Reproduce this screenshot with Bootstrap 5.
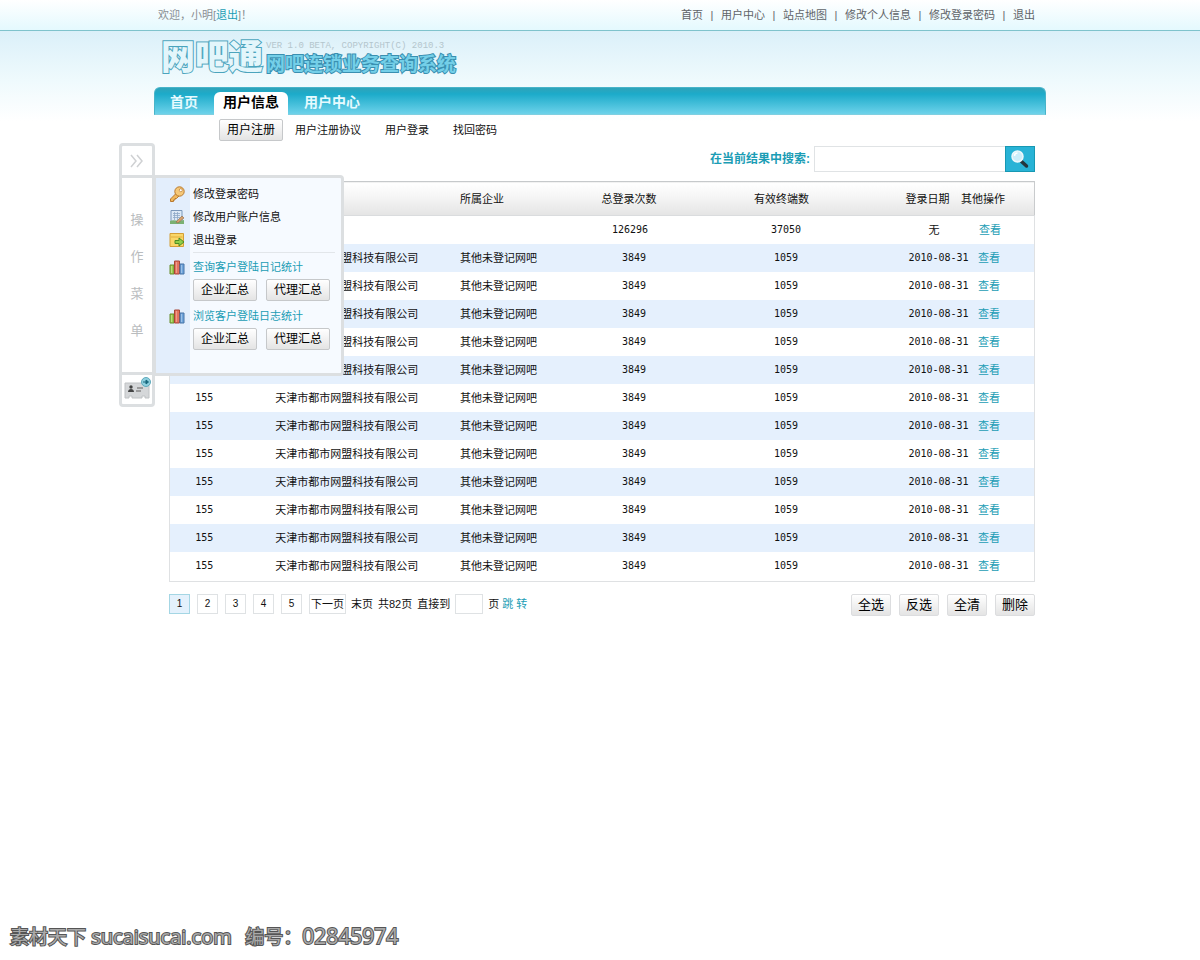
<!DOCTYPE html>
<html lang="zh-CN">
<head>
<meta charset="utf-8">
<meta name="viewport" content="width=device-width, initial-scale=1">
<title>网吧连锁业务查询系统</title>
<link href="https://cdn.jsdelivr.net/npm/bootstrap@5.3.0/dist/css/bootstrap.min.css" rel="stylesheet">
<style>
:root{--teal:#1b9db5;--line:#dcdfe1}
body{font:11px/16px "Liberation Sans","Noto Sans CJK SC",sans-serif;color:#111;
  background:#fff linear-gradient(#dbf0f9,#effafd 50px,#fff 90px) 0 31px/100% 90px no-repeat}
a{text-decoration:none;color:inherit}
.teal,.teal a{color:var(--teal)}
.frame{max-width:892px;width:100%;margin-inline:auto}
.topbar{background:linear-gradient(#fff,#e4f9fe);border-bottom:1px solid #7fc3cc;height:31px;color:#8b9094}
.topbar .frame{padding:0 11px 0 4px}
.toplinks{color:#5f6468}
.toplinks li+li::before{content:"|";display:inline-block;width:18px;text-align:center}
.brand{height:56px;padding-left:7px}
.brand-mark{font:900 34px/48px "Noto Sans CJK SC",sans-serif;color:#e3f6fb;-webkit-text-stroke:2px #4ba4bd;paint-order:stroke fill}
.brand-side{padding:9px 0 0 3px}
.brand-ver{font:9px/12px "Liberation Mono",monospace;color:#b4c6cd}
.brand-name{font:700 19px/22px "Noto Sans CJK SC",sans-serif;color:#74cfe8;-webkit-text-stroke:2px #3a8fb0;paint-order:stroke fill}
.mainnav{height:28px;border:1px solid #48b4c9;border-bottom-color:#7fcfe0;border-radius:6px 6px 0 0;background:linear-gradient(#2fa3b9,#1cabca 6px,#6dd2ea);padding-left:7px}
.mainnav .nav-link{font-size:14px;line-height:20px;font-weight:700;color:#e6fbff;padding:0 8px;margin-top:4px;height:24px;display:block}
.mainnav .nav-link.active{color:#000;background:#fff;border-radius:6px 6px 0 0;padding:0 9px}
.subnav{padding:4px 0 0 65px;gap:12px}
.subnav a{margin-right:12px}
.soft{font-size:12px;line-height:18px;height:22px;padding:1px 7px;border:1px solid #c6c8ca;border-radius:2px;background:linear-gradient(#fff,#e4e4e4);color:#000;white-space:nowrap}
.work{padding:5px 11px 0 15px}
.seek{font-size:12px;font-weight:700}
.seek input{width:191px;height:26px;border:1px solid #e0e3e5;border-right:0;border-radius:0;background:#fff;font-size:12px;padding:0 6px}
.seek button{width:30px;height:26px;border:1px solid #1798b3;background:#28b3d6;padding:0}
.records{table-layout:fixed;width:100%;border:1px solid #dfe1e3;border-top-color:#c6c9cb;margin-top:9px}
.records th{height:34px;font-weight:400;background:linear-gradient(#fff,#f6f6f6 40%,#e4e4e4);border-bottom:1px solid #dadcde}
.records td{height:28px}
.records tr:last-child td{height:30px}
.records th,.records td{padding:0;white-space:nowrap}
.records th:last-child{border-right:1px solid #c9cbcd}
.records tbody tr:nth-child(even){background:#e5f0fd}
.records .num{font-size:10px;font-family:"DejaVu Sans Mono",monospace}
.records :is(th,td):nth-child(-n+2){text-align:center}
.records :is(th,td):nth-child(3){padding-left:5px}
.records :is(th,td):nth-child(4){text-align:center}
.records th:nth-child(4){padding-left:2px}
.records td:nth-child(4){padding-left:12px}
.records :is(th,td):nth-child(5){text-align:center;padding-right:13px}
.records td:nth-child(5){padding-right:4px}
.records th:nth-child(6){padding-left:18px}
.records td:nth-child(6){padding-left:21px}
.records td:nth-child(7){padding-left:17px}
.records .sum td:nth-child(4){padding-left:4px}
.records .sum td:nth-child(6){padding-left:41px}
.records .sum td:nth-child(7){padding-left:18px}
.pager{gap:7px}
.pager .page-box{display:block;min-width:21px;height:20px;line-height:17px;border:1px solid #dfe2e4;text-align:center;font-size:10px;background:#fff}
.pager .page-box.on{background:#e4f1fc;border-color:#a4d6e4}
.pager .page-next{font-size:11px;line-height:18px;padding:0 1px}
.pager .jump{gap:5px}
.pager input{width:28px;height:20px;border:1px solid #dfe2e4;padding:0 3px;font-size:10px}
.below{padding-top:12px}
.tools{gap:8px}
.tools .soft{font-size:13px;border-color:#dcdddf;padding:1px 6px}
.dock{position:absolute;left:-35px;top:28px;z-index:5}
.strip{width:36px;border:3px solid var(--line);border-radius:4px;background:#fff;color:#b9bcbe;font-size:13px}
.strip button{border:0;background:none;padding:0;height:29px}
.strip .word{border:solid var(--line);border-width:3px 0;height:200px;gap:21px}
.panel{width:191px;height:201px;margin:32px 0 0 -2px;border:3px solid var(--line);border-radius:0 4px 4px 0;padding:4px 6px 0 13px;
  background:linear-gradient(90deg,#e3eefc 34px,#f6faff 34px)}
.panel .entry{height:23px;gap:8px;font-size:11px}
.panel .entry svg{flex:none}
.panel .rule{border-top:1px solid #e2e6ea;margin:1px 0 2px 24px}
.panel .pair{gap:9px;padding:1px 0 0 24px;height:26px}
.stamp{font:19px/28px "Noto Sans CJK SC",sans-serif;color:#aaa;-webkit-text-stroke:2px #555;paint-order:stroke fill;padding:0 0 9px 10px}
.stamp span{font:20px/28px "Open Sans",sans-serif}
.stamp .site{margin:0 4px 0 1px}
.stamp .serial{font-size:21px}
</style>
</head>
<body>
<svg width="0" height="0" class="position-absolute" aria-hidden="true">
  <symbol id="bars" viewBox="0 0 16 16"><path d="M1 6h4v9H1z" fill="#9fcb4e" stroke="#668c2d"/><path d="M5.500 2h5v13h-5z" fill="#e4735d" stroke="#a64536"/><path d="M11 5h4v10h-4z" fill="#70a5dc" stroke="#4672a5"/><path d="M2.500 7v7M7.500 3v11M12.500 6v8" stroke="#fff" stroke-opacity=".3"/></symbol>
</svg>
<div class="d-flex flex-column min-vh-100">
  <header>
    <div class="topbar">
      <div class="frame d-flex justify-content-between align-items-center h-100">
        <div>欢迎，小明[<a href="#" class="teal">退出</a>]！</div>
        <ul class="toplinks list-unstyled d-flex mb-0">
          <li><a href="#">首页</a></li><li><a href="#">用户中心</a></li><li><a href="#">站点地图</a></li><li><a href="#">修改个人信息</a></li><li><a href="#">修改登录密码</a></li><li><a href="#">退出</a></li>
        </ul>
      </div>
    </div>
    <div class="frame">
      <div class="brand d-flex">
        <div class="brand-mark">网吧通</div>
        <div class="brand-side">
          <div class="brand-ver">VER 1.0 BETA, COPYRIGHT(C) 2010.3</div>
          <div class="brand-name">网吧连锁业务查询系统</div>
        </div>
      </div>
      <nav class="mainnav">
        <ul class="nav">
          <li><a class="nav-link me-1" href="#">首页</a></li>
          <li class="ms-1"><a class="nav-link active" href="#">用户信息</a></li>
          <li class="ms-2"><a class="nav-link" href="#">用户中心</a></li>
        </ul>
      </nav>
    </div>
  </header>

  <main class="frame position-relative">
    <nav class="subnav d-flex align-items-center">
      <button type="button" class="soft">用户注册</button>
      <a href="#">用户注册协议</a><a href="#">用户登录</a><a href="#">找回密码</a>
    </nav>

    <aside class="dock d-flex align-items-start">
      <div class="strip d-flex flex-column">
        <button type="button" aria-label="展开"><svg width="16" height="16" viewBox="0 0 16 16" fill="none" stroke="#cfd1d3" stroke-width="1.500"><path d="M2 2l5 6-5 6M8 2l5 6-5 6"/></svg></button>
        <div class="word d-flex flex-column align-items-center justify-content-center"><span>操</span><span>作</span><span>菜</span><span>单</span></div>
        <button type="button" aria-label="名片"><svg width="28" height="26" viewBox="0 0 28 26"><path d="M2 6h24v15h-4v-2h-3v2H9v-2H6v2H2z" fill="#d5d7d9" stroke="#bfc2c4"/><circle cx="8" cy="10" r="1.700" fill="#444"/><path d="M5 15c0-4 6-4 6 0z" fill="#444"/><path d="M14 11h6M13 14h5" stroke="#888" stroke-width="1.500"/><circle cx="23" cy="5" r="4.500" fill="#8fd0df" stroke="#5fa9bb"/><path d="M20 5h4M23 3l2.500 2-2.500 2z" stroke="#17677c" fill="#17677c"/></svg></button>
      </div>
      <div class="panel">
        <a href="#" class="entry d-flex align-items-center"><svg width="16" height="16" viewBox="0 0 16 16"><path d="M7.500 7L1.500 13v2.500H4.500v-1.500H6V12.500h1.500l2.500-2.500" fill="#efb85e" stroke="#b9792e"/><circle cx="10.500" cy="5.500" r="4.700" fill="#f5c878" stroke="#b9792e"/><circle cx="11.800" cy="4.200" r="1.500" fill="#fff" stroke="#b9792e" stroke-width=".7"/></svg>修改登录密码</a>
        <a href="#" class="entry d-flex align-items-center"><svg width="16" height="16" viewBox="0 0 16 16"><path d="M2 1.500h11v11H2z" fill="#dce9f6" stroke="#7b98bb"/><path d="M4 4.500h7M4 6.500h7M4 8.500h7M5.500 3v8M8.500 3v8" stroke="#8ea8c8" stroke-width=".8"/><path d="M1 12c4-2 8 1 14-1v4H1z" fill="#7bb173"/><path d="M7 13l6-6 2 2-6 5z" fill="#d6a06c" stroke="#8c6a4c" stroke-width=".6"/></svg>修改用户账户信息</a>
        <a href="#" class="entry d-flex align-items-center"><svg width="16" height="16" viewBox="0 0 16 16"><path d="M1 1.500h13.500v13H1z" fill="#f9d768" stroke="#d39e37"/><path d="M2 5h11.500" stroke="#e1ad3c"/><path d="M6 8.500h4V6l5 4-5 4v-2.500H6z" fill="#8fce49" stroke="#4d8d24"/></svg>退出登录</a>
        <div class="rule"></div>
        <a href="#" class="entry teal d-flex align-items-center"><svg width="16" height="16"><use href="#bars"/></svg>查询客户登陆日记统计</a>
        <div class="pair d-flex"><button type="button" class="soft">企业汇总</button><button type="button" class="soft">代理汇总</button></div>
        <a href="#" class="entry teal d-flex align-items-center"><svg width="16" height="16"><use href="#bars"/></svg>浏览客户登陆日志统计</a>
        <div class="pair d-flex"><button type="button" class="soft">企业汇总</button><button type="button" class="soft">代理汇总</button></div>
      </div>
    </aside>

    <div class="work">
      <form class="seek d-flex justify-content-end align-items-center">
        <label for="q" class="teal me-1">在当前结果中搜索:</label>
        <input id="q" type="text">
        <button type="button" aria-label="搜索"><svg width="22" height="22" viewBox="0 0 22 22"><path d="M12.500 13.500l5 4.500" stroke="#25363d" stroke-width="3.500" stroke-linecap="round"/><circle cx="8.500" cy="8.500" r="5.500" fill="#cdeefa" stroke="#edf8fb" stroke-width="1.500"/><path d="M5.500 8a3 3 0 0 1 3-3" stroke="#fff" fill="none" stroke-width="1.500"/></svg></button>
      </form>

      <table class="records">
        <colgroup><col style="width:8%"><col style="width:25%"><col style="width:13%"><col style="width:14%"><col style="width:23%"><col style="width:8.5%"><col style="width:8.5%"></colgroup>
        <thead><tr><th></th><th></th><th>所属企业</th><th>总登录次数</th><th>有效终端数</th><th>登录日期</th><th>其他操作</th></tr></thead>
        <tbody id="rows">
          <tr class="sum"><td></td><td></td><td></td><td class="num">126296</td><td class="num">37050</td><td>无</td><td class="teal"><a href="#">查看</a></td></tr>
        </tbody>
      </table>

      <div class="below d-flex justify-content-between align-items-start">
        <nav class="pager d-flex align-items-center" aria-label="分页">
          <a href="#" class="page-box on">1</a><a href="#" class="page-box">2</a><a href="#" class="page-box">3</a><a href="#" class="page-box">4</a><a href="#" class="page-box">5</a>
          <div class="jump d-flex align-items-center">
            <a href="#" class="page-box page-next">下一页</a>
            <a href="#">末页</a><span>共82页</span>
            <label for="go">直接到</label>
            <input id="go" type="text"><span>页 <a href="#" class="teal">跳 转</a></span>
          </div>
        </nav>
        <div class="tools d-flex">
          <button type="button" class="soft">全选</button><button type="button" class="soft">反选</button><button type="button" class="soft">全清</button><button type="button" class="soft">删除</button>
        </div>
      </div>
    </div>
  </main>

  <footer class="stamp mt-auto">素材天下 <span class="site">sucaisucai.com</span>&ensp;编号：<span class="serial">02845974</span></footer>
</div>
<script src="https://cdn.jsdelivr.net/npm/bootstrap@5.3.0/dist/js/bootstrap.bundle.min.js"></script>
<script>
const row = '<tr><td class="num">155</td><td>天津市都市网盟科技有限公司</td><td>其他未登记网吧</td><td class="num">3849</td><td class="num">1059</td><td class="num">2010-08-31</td><td class="teal"><a href="#">查看</a></td></tr>';
document.getElementById('rows').insertAdjacentHTML('beforeend', row.repeat(12));
</script>
</body>
</html>
